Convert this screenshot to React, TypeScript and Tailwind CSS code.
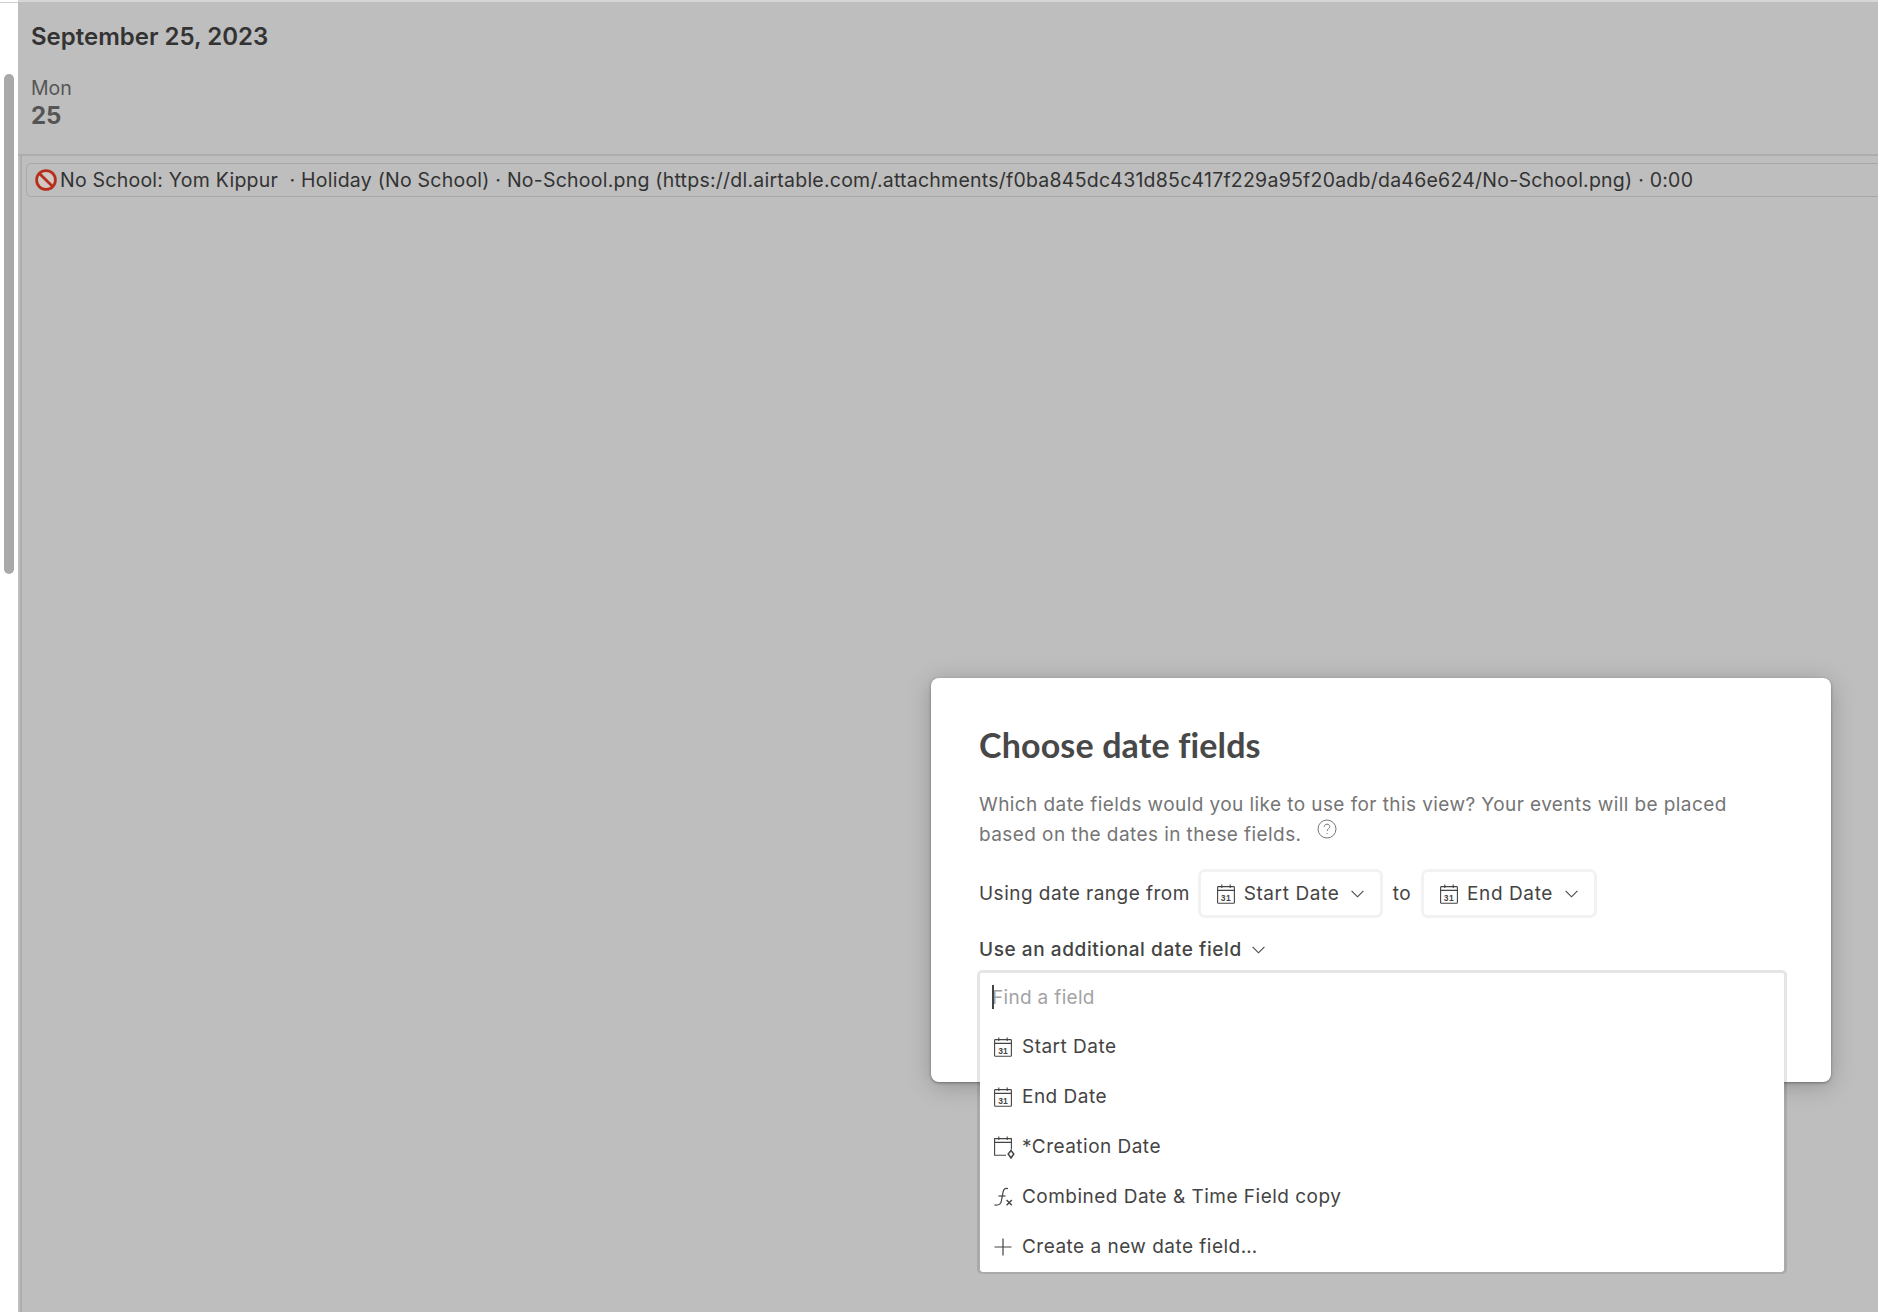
import React from "react";

const ui = { fontFamily: "Inter, 'Liberation Sans', sans-serif" };

function CalIcon() {
  return (
    <svg width="18" height="20" viewBox="0 0 18 20" fill="none" stroke="#444" strokeWidth="1.1" className="shrink-0">
      <rect x="0.6" y="2.6" width="16.8" height="16.6" rx="0.8" />
      <path d="M0.6 6.4H17.4M4.8 0.6V4M13.2 0.6V4" />
      <text x="9" y="16.6" textAnchor="middle" fontSize="8.5" fontWeight="700" fill="#444" stroke="none" fontFamily="'Liberation Sans', sans-serif">31</text>
    </svg>
  );
}

function CreatedIcon() {
  return (
    <svg width="21" height="23" viewBox="0 0 21 23" fill="none" stroke="#444" strokeWidth="1.1" className="shrink-0">
      <path d="M12 19.2H0.6V2.6H17.4V13.5" />
      <path d="M0.6 6.4H17.4M4.8 0.6V4M13.2 0.6V4" />
      <path d="M17 14.5L19.8 18L17 22L14.2 18Z" strokeWidth="1.5" />
    </svg>
  );
}

function FxIcon() {
  return (
    <svg width="19" height="20" viewBox="0 0 19 20" fill="none" stroke="#444" strokeWidth="1.2" className="shrink-0">
      <path d="M14 1.6C11.2 .7 9.8 2 9.2 4.5L7.4 14C6.8 17.2 4.4 18.6 0.4 18" />
      <path d="M4.5 9H11.5" />
      <path d="M12.6 13L17.8 18.2M17.8 13L12.6 18.2" strokeWidth="1.4" />
    </svg>
  );
}

function PlusIcon() {
  return (
    <svg width="18" height="18" viewBox="0 0 18 18" fill="none" stroke="#444" strokeWidth="1.2" className="shrink-0">
      <path d="M9 0.5V17.5M0.5 9H17.5" />
    </svg>
  );
}

function Chevron() {
  return (
    <svg width="13" height="8" viewBox="0 0 13 8" fill="none" stroke="#444" strokeWidth="1.1" className="shrink-0">
      <path d="M0.6 0.8L6.5 6.8L12.4 0.8" />
    </svg>
  );
}

function NoEntry() {
  return (
    <svg width="24" height="24" viewBox="0 0 24 24" fill="none" className="shrink-0">
      <circle cx="12" cy="12" r="9.4" stroke="#b5301c" strokeWidth="2.8" fill="#d2c9c6" />
      <path d="M5.4 5.4L18.6 18.6" stroke="#b5301c" strokeWidth="2.8" />
    </svg>
  );
}

function FieldButton({ label, width }: { label: string; width: string }) {
  return (
    <div className={`flex h-[49px] items-center justify-center gap-[9px] rounded-[7px] border-[3px] border-[#f2f2f2] text-[19px] text-[#444] ${width}`}>
      <CalIcon />
      <span className="pt-[1px] tracking-[0.6px]">{label}</span>
      <span className="ml-[3px] flex"><Chevron /></span>
    </div>
  );
}

function Row({ icon, label }: { icon: React.ReactNode; label: string }) {
  return (
    <div className="flex h-[50px] items-center pl-[1px]">
      <div className="flex w-[28px] shrink-0 items-center">{icon}</div>
      <span className="text-[19px] tracking-[0.48px] text-[#444]">{label}</span>
    </div>
  );
}

export default function App() {
  return (
    <div className="relative flex h-[1312px] w-[1878px] overflow-hidden bg-white" style={ui}>
      <aside className="mt-[2px] w-[18px] shrink-0 border-t border-[#d0d0d0] pl-[4px] pt-[71px]">
        <div className="h-[500px] w-[10px] rounded-[5px] bg-[#a9a9a9]" />
      </aside>
      <main className="flex min-w-0 flex-1 flex-col border-t-2 border-[#d6d6d6] bg-[#bebebe]">
        <div className="flex h-[154px] flex-col border-b-2 border-[#adadad] pl-[13px]">
          <h1 className="mt-[20px] text-[24px] leading-[30px] font-semibold text-[#333]">September 25, 2023</h1>
          <div className="mt-[24px] text-[19.5px] leading-[24px] text-[#555]">Mon</div>
          <div className="text-[24px] leading-[32px] font-bold text-[#555]">25</div>
        </div>
        <div className="ml-[2px] flex-1 border-l-2 border-[#adadad] pl-[4px] pt-[7px]">
          <div className="flex h-[34px] items-center gap-[2px] rounded-l-[5px] border border-r-0 border-[#a8a8a8] pl-[7px] text-[19.5px] whitespace-pre text-[#333]">
            <NoEntry />
            <span className="pt-[2px] tracking-[0.235px]">No School: Yom Kippur  · Holiday (No School) · No-School.png (https://dl.airtable.com/.attachments/f0ba845dc431d85c417f229a95f20adb/da46e624/No-School.png) · 0:00</span>
          </div>
        </div>
      </main>

      <section className="absolute left-[931px] top-[678px] h-[404px] w-[900px] rounded-[8px] bg-white pl-[48px] shadow-[0_4px_24px_rgba(0,0,0,0.22),0_1px_3px_rgba(0,0,0,0.35)]">
        <h2 className="mt-[47px] pt-[1px] text-[34px] leading-[38px] font-bold tracking-[0.15px] text-[#484848]" style={{ fontFamily: "Lato, sans-serif" }}>Choose date fields</h2>
        <p className="mt-[26px] text-[19px] leading-[30px] tracking-[0.42px] text-[#757575]">
          Which date fields would you like to use for this view? Your events will be placed
          <br />
          based on the dates in these fields.
          <svg width="20" height="20" viewBox="0 0 20 20" fill="none" stroke="#777" strokeWidth="1" className="-my-[8px] ml-[15px] inline-block align-[10px]">
            <circle cx="10" cy="10" r="9" />
            <path d="M7.2 7.8C7.2 6.2 8.5 5.2 10 5.2C11.6 5.2 12.8 6.2 12.8 7.6C12.8 9.6 10 9.8 10 12" />
            <path d="M10 14V15" />
          </svg>
        </p>
        <div className="mt-[19px] flex items-center text-[19px] tracking-[0.48px] text-[#444]">
          <span className="w-[219px] pt-[1px]">Using date range from</span>
          <FieldButton label="Start Date" width="w-[185px]" />
          <span className="w-[38px] pt-[1px] text-center">to</span>
          <FieldButton label="End Date" width="w-[176px]" />
        </div>
        <div className="mt-[18px] flex h-[28px] items-center gap-[10px] text-[19px] font-medium tracking-[0.58px] text-[#444]">
          Use an additional date field <Chevron />
        </div>
        <div className="absolute left-[46px] top-[292px] w-[810px] rounded-[5px] border-[3px] border-[rgba(0,0,0,0.1)] bg-clip-padding">
          <div className="-mb-[1px] rounded-[3px] bg-white px-[13px]">
            <div className="flex h-[49px] items-center -ml-[1px] pt-[1px]">
              <span className="relative text-[19px] tracking-[0.32px] text-[#a3a3a3]">
                <span className="absolute left-0 top-[1px] h-[24px] w-[2px] bg-[#444]" />
                Find a field
              </span>
            </div>
            <Row icon={<CalIcon />} label="Start Date" />
            <Row icon={<CalIcon />} label="End Date" />
            <Row icon={<CreatedIcon />} label="*Creation Date" />
            <Row icon={<FxIcon />} label="Combined Date & Time Field copy" />
            <Row icon={<PlusIcon />} label="Create a new date field…" />
          </div>
        </div>
      </section>
    </div>
  );
}
